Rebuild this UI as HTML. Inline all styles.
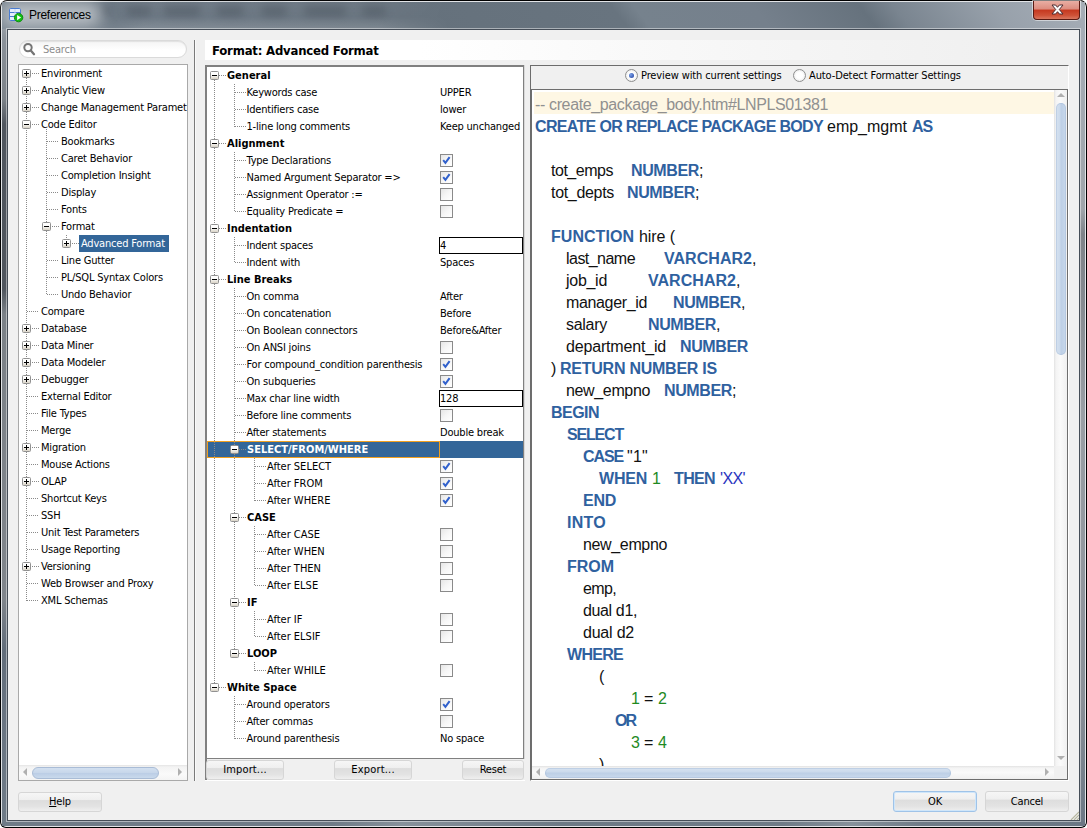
<!DOCTYPE html><html><head><meta charset="utf-8"><title>Preferences</title><style>
*{box-sizing:border-box;margin:0;padding:0}
html,body{width:1087px;height:828px;overflow:hidden;background:#fff}
body{font-family:"DejaVu Sans Condensed","Liberation Sans",sans-serif;font-size:11px;color:#000;position:relative;letter-spacing:-0.2px}
.abs{position:absolute}
#win{position:absolute;left:0;top:0;width:1087px;height:828px;border-radius:7px 7px 6px 6px;background:#000;overflow:hidden}
#glass{position:absolute;left:1px;top:1px;right:1px;bottom:1px;border-radius:6px 6px 5px 5px;border:1px solid rgba(255,255,255,.8);background:#6f7b87}
#tb{position:absolute;left:2px;top:2px;width:1083px;height:27px;background:linear-gradient(52deg,#7a8691 8px,#6b7783 94px,#65717c 323px,#68747f 494px,#76828d 512px,#75808c 606px,#66727d 690px,#7a8590 717px,#98a1ab 796px,#a5adb6 864px)}
#fl{position:absolute;left:2px;top:29px;width:5px;height:797px;background:linear-gradient(#8d949c 0,#7c8288 70px,#50565e 95px,#4f555d 260px,#7b8187 285px,#80858b 570px,#626d7a 620px,#6a7582 700px,#6f7b87 100%)}
#fr{position:absolute;left:1080px;top:29px;width:5px;height:797px;background:linear-gradient(#a5adb6 0,#a0a5ab 180px,#7e8389 205px,#858a90 270px,#9a9fa5 385px,#8a9098 670px,#6b7784 100%)}
#fb{position:absolute;left:2px;top:821px;width:1083px;height:5px;background:linear-gradient(90deg,#6f7b87 0,#6f7b87 330px,#87919b 400px,#7a8590 480px,#6d7985 560px,#6f7b87 780px,#87919b 850px,#6f7b87 920px,#6b7784 100%)}
.blob{position:absolute;top:6px;height:10px;border-radius:5px;background:#4a545f;filter:blur(4.5px);opacity:.62}
#tbl{position:absolute;left:90px;top:2px;width:360px;height:27px;background:linear-gradient(rgba(255,255,255,.05) 0,rgba(255,255,255,.03) 55%,rgba(255,255,255,.16) 100%);-webkit-mask-image:linear-gradient(90deg,transparent,#000 15%,#000 80%,transparent);mask-image:linear-gradient(90deg,transparent,#000 15%,#000 80%,transparent)}
#titleglow{position:absolute;left:2px;top:2px;width:100px;height:25px;border-radius:12px;background:rgba(255,255,255,.5);filter:blur(8px)}
#title{position:absolute;left:29px;top:8px;font-family:"Liberation Sans",sans-serif;font-size:12px;color:#000;line-height:15px;letter-spacing:-.28px}
#inner{position:absolute;left:7px;top:29px;width:1073px;height:792px;border:1px solid #454d57;background:#f0f0f0}
#innerhl{position:absolute;left:6px;top:28px;width:1075px;height:794px;border:1px solid rgba(255,255,255,.45)}
#close{position:absolute;left:1033px;top:1px;width:47px;height:19px;border:1px solid #5a1a12;border-top:none;border-radius:0 0 4px 4px;
 background:linear-gradient(#e9aea3 0,#dc8c7f 45%,#c5381f 50%,#cf5238 80%,#d9775f 100%);box-shadow:0 0 0 1px rgba(255,255,255,.5)}
/* panels */
.btn{position:absolute;height:20px;border:1px solid #d6d6d6;border-radius:3px;background:linear-gradient(#f6f6f6 0,#efefef 38%,#dddddd 42%,#e3e3e3 75%,#efefef 100%);text-align:center;line-height:18px;font-size:11px}
.exp{z-index:2;position:absolute;width:9px;height:9px;border:1px solid #919191;border-radius:1.5px;background:linear-gradient(#fff 0,#fdfdfc 40%,#d9d3c6 100%)}
.exp:before{content:"";position:absolute;left:1px;top:3px;width:5px;height:1px;background:#000}
.exp.p:after{content:"";position:absolute;left:3px;top:1px;width:1px;height:5px;background:#000}
.row{position:absolute;left:0;height:17px;line-height:18px;white-space:nowrap}
.hd{position:absolute;height:1px;background-image:linear-gradient(90deg,#8a8a8a 1px,transparent 1px);background-size:2px 1px}
.vd{position:absolute;width:1px;background-image:linear-gradient(#8a8a8a 1px,transparent 1px);background-size:1px 2px}
.cb{position:absolute;width:13px;height:13px;border:1px solid #8a8a8a;background:linear-gradient(135deg,#e6e6e6,#f6f6f6 50%,#fff)}
.cb svg{position:absolute;left:1px;top:1px}
.code{letter-spacing:0;position:absolute;font-family:"Liberation Sans",sans-serif;font-size:16px;line-height:22px;height:22px;white-space:pre;display:inline-block;transform-origin:0 50%}
.k{color:#2f619f;font-weight:bold}.t{color:#111}.c{color:#909090}.n{color:#1f8a1f}.q{color:#2a35c0}
</style></head><body>
<div id="win"><div id="glass"></div><div id="tb"></div><div id="fl"></div><div id="fr"></div><div id="fb"></div>
<div class="blob" style="left:100px;width:12px"></div>
<div class="blob" style="left:126px;width:26px"></div>
<div class="blob" style="left:163px;width:38px"></div>
<div class="blob" style="left:216px;width:28px"></div>
<div class="blob" style="left:261px;width:26px"></div>
<div class="blob" style="left:304px;width:42px"></div>
<div class="blob" style="left:362px;width:24px"></div>
<div id="tbl"></div><div id="titleglow"></div>
<svg class="abs" style="left:8px;top:7px" width="18" height="17" viewBox="0 0 18 17">
<rect x="1.5" y="1.5" width="11" height="12" rx="1.2" fill="#e6eefb" stroke="#4a7cd0"/>
<path d="M1.5 5.5h11M1.5 9.5h11" stroke="#4a7cd0" fill="none"/>
<path d="M7 2v11" stroke="#c4d6f4" fill="none"/>
<circle cx="10.6" cy="10.6" r="4.2" fill="#14c014" stroke="#0c8c0c" stroke-width="1"/>
<path d="M9.1 8v5.2l4-2.6z" fill="#fff"/></svg>
<div id="title">Preferences</div>
<div id="close"><svg class="abs" style="left:17px;top:3px" width="13" height="11" viewBox="0 0 13 11"><path d="M1 1h3.6l1.9 2.3L8.4 1H12L8.3 5.5 12 10H8.4L6.5 7.7 4.6 10H1l3.7-4.5z" fill="#fff" stroke="#4a2a30" stroke-width="1" stroke-linejoin="round"/></svg></div>
<div id="innerhl"></div><div id="inner"></div>
</div>
<div class="abs" style="left:19px;top:40px;width:168px;height:18px;border:1px solid #dadada;border-radius:9px;background:linear-gradient(#f4f4f4,#fff 60%);box-shadow:inset 0 1px 1px rgba(0,0,0,.08)"></div>
<svg class="abs" style="left:23px;top:42px" width="13" height="14" viewBox="0 0 13 14"><circle cx="5" cy="5.6" r="3.7" fill="none" stroke="#757575" stroke-width="2"/><path d="M7.8 8.6l3.2 3.6" stroke="#757575" stroke-width="2.3" stroke-linecap="round"/></svg>
<div class="abs" style="left:43px;top:43px;line-height:14px;color:#8c8c8c">Search</div>
<div class="abs" id="ltree" style="left:18px;top:64px;width:170px;height:717px;border:1px solid #a9a9a9;background:#fff;overflow:hidden">
<div class="hd" style="left:13px;top:8px;width:8px"></div>
<div class="exp p" style="left:3px;top:4px"></div>
<div class="row" style="left:22px;top:0px;">Environment</div>
<div class="hd" style="left:13px;top:25px;width:8px"></div>
<div class="exp p" style="left:3px;top:21px"></div>
<div class="row" style="left:22px;top:17px;">Analytic View</div>
<div class="hd" style="left:13px;top:42px;width:8px"></div>
<div class="exp p" style="left:3px;top:38px"></div>
<div class="row" style="left:22px;top:34px;">Change Management Paramet</div>
<div class="hd" style="left:13px;top:59px;width:8px"></div>
<div class="exp" style="left:3px;top:55px"></div>
<div class="row" style="left:22px;top:51px;">Code Editor</div>
<div class="hd" style="left:28px;top:76px;width:12px"></div>
<div class="row" style="left:42px;top:68px;">Bookmarks</div>
<div class="hd" style="left:28px;top:93px;width:12px"></div>
<div class="row" style="left:42px;top:85px;">Caret Behavior</div>
<div class="hd" style="left:28px;top:110px;width:12px"></div>
<div class="row" style="left:42px;top:102px;">Completion Insight</div>
<div class="hd" style="left:28px;top:127px;width:12px"></div>
<div class="row" style="left:42px;top:119px;">Display</div>
<div class="hd" style="left:28px;top:144px;width:12px"></div>
<div class="row" style="left:42px;top:136px;">Fonts</div>
<div class="hd" style="left:33px;top:161px;width:8px"></div>
<div class="exp" style="left:23px;top:157px"></div>
<div class="row" style="left:42px;top:153px;">Format</div>
<div class="hd" style="left:53px;top:178px;width:8px"></div>
<div class="exp p" style="left:43px;top:174px"></div>
<div class="abs" style="left:60px;top:170px;width:90px;height:17px;background:#336699"></div>
<div class="row" style="left:62px;top:170px;color:#fff;">Advanced Format</div>
<div class="hd" style="left:28px;top:195px;width:12px"></div>
<div class="row" style="left:42px;top:187px;">Line Gutter</div>
<div class="hd" style="left:28px;top:212px;width:12px"></div>
<div class="row" style="left:42px;top:204px;">PL/SQL Syntax Colors</div>
<div class="hd" style="left:28px;top:229px;width:12px"></div>
<div class="row" style="left:42px;top:221px;">Undo Behavior</div>
<div class="hd" style="left:8px;top:246px;width:12px"></div>
<div class="row" style="left:22px;top:238px;">Compare</div>
<div class="hd" style="left:13px;top:263px;width:8px"></div>
<div class="exp p" style="left:3px;top:259px"></div>
<div class="row" style="left:22px;top:255px;">Database</div>
<div class="hd" style="left:13px;top:280px;width:8px"></div>
<div class="exp p" style="left:3px;top:276px"></div>
<div class="row" style="left:22px;top:272px;">Data Miner</div>
<div class="hd" style="left:13px;top:297px;width:8px"></div>
<div class="exp p" style="left:3px;top:293px"></div>
<div class="row" style="left:22px;top:289px;">Data Modeler</div>
<div class="hd" style="left:13px;top:314px;width:8px"></div>
<div class="exp p" style="left:3px;top:310px"></div>
<div class="row" style="left:22px;top:306px;">Debugger</div>
<div class="hd" style="left:8px;top:331px;width:12px"></div>
<div class="row" style="left:22px;top:323px;">External Editor</div>
<div class="hd" style="left:8px;top:348px;width:12px"></div>
<div class="row" style="left:22px;top:340px;">File Types</div>
<div class="hd" style="left:8px;top:365px;width:12px"></div>
<div class="row" style="left:22px;top:357px;">Merge</div>
<div class="hd" style="left:13px;top:382px;width:8px"></div>
<div class="exp p" style="left:3px;top:378px"></div>
<div class="row" style="left:22px;top:374px;">Migration</div>
<div class="hd" style="left:8px;top:399px;width:12px"></div>
<div class="row" style="left:22px;top:391px;">Mouse Actions</div>
<div class="hd" style="left:13px;top:416px;width:8px"></div>
<div class="exp p" style="left:3px;top:412px"></div>
<div class="row" style="left:22px;top:408px;">OLAP</div>
<div class="hd" style="left:8px;top:433px;width:12px"></div>
<div class="row" style="left:22px;top:425px;">Shortcut Keys</div>
<div class="hd" style="left:8px;top:450px;width:12px"></div>
<div class="row" style="left:22px;top:442px;">SSH</div>
<div class="hd" style="left:8px;top:467px;width:12px"></div>
<div class="row" style="left:22px;top:459px;">Unit Test Parameters</div>
<div class="hd" style="left:8px;top:484px;width:12px"></div>
<div class="row" style="left:22px;top:476px;">Usage Reporting</div>
<div class="hd" style="left:13px;top:501px;width:8px"></div>
<div class="exp p" style="left:3px;top:497px"></div>
<div class="row" style="left:22px;top:493px;">Versioning</div>
<div class="hd" style="left:8px;top:518px;width:12px"></div>
<div class="row" style="left:22px;top:510px;">Web Browser and Proxy</div>
<div class="hd" style="left:8px;top:535px;width:12px"></div>
<div class="row" style="left:22px;top:527px;">XML Schemas</div>
<div class="vd" style="left:7px;top:13px;height:523px"></div>
<div class="vd" style="left:27px;top:64px;height:166px"></div>
<div class="vd" style="left:47px;top:170px;height:4px"></div>
<div class="abs" style="left:0;top:700px;width:168px;height:15px;background:linear-gradient(#e4e4e4 0,#f3f3f3 2px,#fafafa 60%,#f4f4f4)"></div>
<div class="abs" style="left:13px;top:702px;width:127px;height:12px;border:1px solid #a9bcd6;border-radius:6px;background:linear-gradient(#d3e0f0,#c6d6ea 50%,#bccee6 55%,#c9d9ec)"></div>
<div class="abs" style="left:4px;top:703px;border:4px solid transparent;border-right:4px solid #b0b0b0;border-left:none"></div>
<div class="abs" style="left:159px;top:703px;border:4px solid transparent;border-left:4px solid #b0b0b0;border-right:none"></div>
</div>
<div class="abs" style="left:194px;top:40px;width:1px;height:741px;background:#7a7a7a"></div>
<div class="abs" style="left:195px;top:40px;width:1px;height:741px;background:#fafafa"></div>
<div class="abs" style="left:205px;top:40px;width:864px;height:20px;background:linear-gradient(90deg,#fff 0,#fff 25%,#f9f9f9 50%,#f0f0f0 92%)"></div>
<div class="abs" style="left:212px;top:43px;font-weight:bold;font-size:13px;line-height:16px">Format: Advanced Format</div>
<div class="abs" id="stree" style="left:205px;top:65px;width:319px;height:694px;border:2px solid #808080;border-right-width:1px;border-bottom-width:1px;background:#fff;overflow:hidden;box-shadow:1px 0 0 #d8d8d8">
<div class="hd" style="left:12px;top:8px;width:7px"></div>
<div class="exp" style="left:3px;top:4px"></div>
<div class="row" style="left:20px;top:0px;font-weight:bold;letter-spacing:0;">General</div>
<div class="hd" style="left:28px;top:25px;width:12px"></div>
<div class="row" style="left:39.5px;top:17px">Keywords case</div>
<div class="row" style="left:233px;top:17px">UPPER</div>
<div class="hd" style="left:28px;top:42px;width:12px"></div>
<div class="row" style="left:39.5px;top:34px">Identifiers case</div>
<div class="row" style="left:233px;top:34px">lower</div>
<div class="hd" style="left:28px;top:59px;width:12px"></div>
<div class="row" style="left:39.5px;top:51px">1-line long comments</div>
<div class="row" style="left:233px;top:51px">Keep unchanged</div>
<div class="hd" style="left:12px;top:76px;width:7px"></div>
<div class="exp" style="left:3px;top:72px"></div>
<div class="row" style="left:20px;top:68px;font-weight:bold;letter-spacing:0;">Alignment</div>
<div class="hd" style="left:28px;top:93px;width:12px"></div>
<div class="row" style="left:39.5px;top:85px">Type Declarations</div>
<div class="cb" style="left:233px;top:87px"><svg width="9" height="9" viewBox="0 0 9 9"><path d="M1.2 4.2l2.2 2.6 4.2-5.6" fill="none" stroke="#3060cc" stroke-width="2"/></svg></div>
<div class="hd" style="left:28px;top:110px;width:12px"></div>
<div class="row" style="left:39.5px;top:102px">Named Argument Separator =></div>
<div class="cb" style="left:233px;top:104px"><svg width="9" height="9" viewBox="0 0 9 9"><path d="M1.2 4.2l2.2 2.6 4.2-5.6" fill="none" stroke="#3060cc" stroke-width="2"/></svg></div>
<div class="hd" style="left:28px;top:127px;width:12px"></div>
<div class="row" style="left:39.5px;top:119px">Assignment Operator :=</div>
<div class="cb" style="left:233px;top:121px"></div>
<div class="hd" style="left:28px;top:144px;width:12px"></div>
<div class="row" style="left:39.5px;top:136px">Equality Predicate =</div>
<div class="cb" style="left:233px;top:138px"></div>
<div class="hd" style="left:12px;top:161px;width:7px"></div>
<div class="exp" style="left:3px;top:157px"></div>
<div class="row" style="left:20px;top:153px;font-weight:bold;letter-spacing:0;">Indentation</div>
<div class="hd" style="left:28px;top:178px;width:12px"></div>
<div class="row" style="left:39.5px;top:170px">Indent spaces</div>
<div class="abs" style="left:232px;top:170px;width:84px;height:17px;border:1px solid #000;border-width:1px 1px 1px 1px;background:#fff;line-height:15px;padding-left:0">4</div>
<div class="hd" style="left:28px;top:195px;width:12px"></div>
<div class="row" style="left:39.5px;top:187px">Indent with</div>
<div class="row" style="left:233px;top:187px">Spaces</div>
<div class="hd" style="left:12px;top:212px;width:7px"></div>
<div class="exp" style="left:3px;top:208px"></div>
<div class="row" style="left:20px;top:204px;font-weight:bold;letter-spacing:0;">Line Breaks</div>
<div class="hd" style="left:28px;top:229px;width:12px"></div>
<div class="row" style="left:39.5px;top:221px">On comma</div>
<div class="row" style="left:233px;top:221px">After</div>
<div class="hd" style="left:28px;top:246px;width:12px"></div>
<div class="row" style="left:39.5px;top:238px">On concatenation</div>
<div class="row" style="left:233px;top:238px">Before</div>
<div class="hd" style="left:28px;top:263px;width:12px"></div>
<div class="row" style="left:39.5px;top:255px">On Boolean connectors</div>
<div class="row" style="left:233px;top:255px">Before&After</div>
<div class="hd" style="left:28px;top:280px;width:12px"></div>
<div class="row" style="left:39.5px;top:272px">On ANSI joins</div>
<div class="cb" style="left:233px;top:274px"></div>
<div class="hd" style="left:28px;top:297px;width:12px"></div>
<div class="row" style="left:39.5px;top:289px">For compound_condition parenthesis</div>
<div class="cb" style="left:233px;top:291px"><svg width="9" height="9" viewBox="0 0 9 9"><path d="M1.2 4.2l2.2 2.6 4.2-5.6" fill="none" stroke="#3060cc" stroke-width="2"/></svg></div>
<div class="hd" style="left:28px;top:314px;width:12px"></div>
<div class="row" style="left:39.5px;top:306px">On subqueries</div>
<div class="cb" style="left:233px;top:308px"><svg width="9" height="9" viewBox="0 0 9 9"><path d="M1.2 4.2l2.2 2.6 4.2-5.6" fill="none" stroke="#3060cc" stroke-width="2"/></svg></div>
<div class="hd" style="left:28px;top:331px;width:12px"></div>
<div class="row" style="left:39.5px;top:323px">Max char line width</div>
<div class="abs" style="left:232px;top:323px;width:84px;height:17px;border:1px solid #000;border-width:1px 1px 1px 1px;background:#fff;line-height:15px;padding-left:0">128</div>
<div class="hd" style="left:28px;top:348px;width:12px"></div>
<div class="row" style="left:39.5px;top:340px">Before line comments</div>
<div class="cb" style="left:233px;top:342px"></div>
<div class="hd" style="left:28px;top:365px;width:12px"></div>
<div class="row" style="left:39.5px;top:357px">After statements</div>
<div class="row" style="left:233px;top:357px">Double break</div>
<div class="abs" style="left:0;top:374px;width:316px;height:17px;background:#336699"></div>
<div class="abs" style="left:0;top:374px;width:233px;height:17px;border:1px solid #f0a020"></div>
<div class="hd" style="left:32px;top:382px;width:7px"></div>
<div class="exp" style="left:23px;top:378px"></div>
<div class="row" style="left:40px;top:374px;font-weight:bold;letter-spacing:0;color:#fff;">SELECT/FROM/WHERE</div>
<div class="hd" style="left:48px;top:399px;width:12px"></div>
<div class="row" style="left:60.0px;top:391px;letter-spacing:0">After SELECT</div>
<div class="cb" style="left:233px;top:393px"><svg width="9" height="9" viewBox="0 0 9 9"><path d="M1.2 4.2l2.2 2.6 4.2-5.6" fill="none" stroke="#3060cc" stroke-width="2"/></svg></div>
<div class="hd" style="left:48px;top:416px;width:12px"></div>
<div class="row" style="left:60.0px;top:408px;letter-spacing:0">After FROM</div>
<div class="cb" style="left:233px;top:410px"><svg width="9" height="9" viewBox="0 0 9 9"><path d="M1.2 4.2l2.2 2.6 4.2-5.6" fill="none" stroke="#3060cc" stroke-width="2"/></svg></div>
<div class="hd" style="left:48px;top:433px;width:12px"></div>
<div class="row" style="left:60.0px;top:425px;letter-spacing:0">After WHERE</div>
<div class="cb" style="left:233px;top:427px"><svg width="9" height="9" viewBox="0 0 9 9"><path d="M1.2 4.2l2.2 2.6 4.2-5.6" fill="none" stroke="#3060cc" stroke-width="2"/></svg></div>
<div class="hd" style="left:32px;top:450px;width:7px"></div>
<div class="exp" style="left:23px;top:446px"></div>
<div class="row" style="left:40px;top:442px;font-weight:bold;letter-spacing:0;">CASE</div>
<div class="hd" style="left:48px;top:467px;width:12px"></div>
<div class="row" style="left:60.0px;top:459px;letter-spacing:0">After CASE</div>
<div class="cb" style="left:233px;top:461px"></div>
<div class="hd" style="left:48px;top:484px;width:12px"></div>
<div class="row" style="left:60.0px;top:476px;letter-spacing:0">After WHEN</div>
<div class="cb" style="left:233px;top:478px"></div>
<div class="hd" style="left:48px;top:501px;width:12px"></div>
<div class="row" style="left:60.0px;top:493px;letter-spacing:0">After THEN</div>
<div class="cb" style="left:233px;top:495px"></div>
<div class="hd" style="left:48px;top:518px;width:12px"></div>
<div class="row" style="left:60.0px;top:510px;letter-spacing:0">After ELSE</div>
<div class="cb" style="left:233px;top:512px"></div>
<div class="hd" style="left:32px;top:535px;width:7px"></div>
<div class="exp" style="left:23px;top:531px"></div>
<div class="row" style="left:40px;top:527px;font-weight:bold;letter-spacing:0;">IF</div>
<div class="hd" style="left:48px;top:552px;width:12px"></div>
<div class="row" style="left:60.0px;top:544px;letter-spacing:0">After IF</div>
<div class="cb" style="left:233px;top:546px"></div>
<div class="hd" style="left:48px;top:569px;width:12px"></div>
<div class="row" style="left:60.0px;top:561px;letter-spacing:0">After ELSIF</div>
<div class="cb" style="left:233px;top:563px"></div>
<div class="hd" style="left:32px;top:586px;width:7px"></div>
<div class="exp" style="left:23px;top:582px"></div>
<div class="row" style="left:40px;top:578px;font-weight:bold;letter-spacing:0;">LOOP</div>
<div class="hd" style="left:48px;top:603px;width:12px"></div>
<div class="row" style="left:60.0px;top:595px;letter-spacing:0">After WHILE</div>
<div class="cb" style="left:233px;top:597px"></div>
<div class="hd" style="left:12px;top:620px;width:7px"></div>
<div class="exp" style="left:3px;top:616px"></div>
<div class="row" style="left:20px;top:612px;font-weight:bold;letter-spacing:0;">White Space</div>
<div class="hd" style="left:28px;top:637px;width:12px"></div>
<div class="row" style="left:39.5px;top:629px">Around operators</div>
<div class="cb" style="left:233px;top:631px"><svg width="9" height="9" viewBox="0 0 9 9"><path d="M1.2 4.2l2.2 2.6 4.2-5.6" fill="none" stroke="#3060cc" stroke-width="2"/></svg></div>
<div class="hd" style="left:28px;top:654px;width:12px"></div>
<div class="row" style="left:39.5px;top:646px">After commas</div>
<div class="cb" style="left:233px;top:648px"></div>
<div class="hd" style="left:28px;top:671px;width:12px"></div>
<div class="row" style="left:39.5px;top:663px">Around parenthesis</div>
<div class="row" style="left:233px;top:663px">No space</div>
<div class="vd" style="left:7px;top:13px;height:603px"></div>
<div class="vd" style="left:27px;top:17px;height:43px"></div>
<div class="vd" style="left:27px;top:85px;height:60px"></div>
<div class="vd" style="left:27px;top:170px;height:26px"></div>
<div class="vd" style="left:27px;top:221px;height:361px"></div>
<div class="vd" style="left:27px;top:629px;height:43px"></div>
<div class="vd" style="left:47px;top:391px;height:43px"></div>
<div class="vd" style="left:47px;top:459px;height:60px"></div>
<div class="vd" style="left:47px;top:544px;height:26px"></div>
<div class="vd" style="left:47px;top:595px;height:9px"></div>
</div>
<div class="abs" style="left:205px;top:759px;width:2px;height:21px;background:#808080"></div>
<div class="abs" style="left:205px;top:780px;width:320px;height:1px;background:#fff"></div>
<div class="btn" style="left:206px;top:760px;width:78px;letter-spacing:.12px">Import...</div>
<div class="btn" style="left:334px;top:760px;width:78px;letter-spacing:.2px">Export...</div>
<div class="btn" style="left:462px;top:760px;width:62px">Reset</div>
<div class="btn" style="left:18px;top:792px;width:84px;height:20px;line-height:18px"><u>H</u>elp</div>
<div class="btn" style="left:893px;top:791px;width:84px;height:21px;line-height:19px;border-color:#9fc3e8;box-shadow:inset 0 0 0 1px #cfe6fa">OK</div>
<div class="btn" style="left:985px;top:791px;width:84px;height:21px;line-height:19px">Cancel</div>
<div class="abs" style="left:530px;top:65px;width:539px;height:716px;border:1px solid #6c6c6c;border-right-color:#fff;border-bottom-color:#fff"></div>
<div class="abs" style="left:625px;top:69px;width:13px;height:13px;border:1px solid #8e8f8f;border-radius:50%;background:radial-gradient(circle at 50% 50%,#fff 40%,#e0e0e0 100%)"><div class="abs" style="left:3px;top:3px;width:5px;height:5px;border-radius:50%;background:radial-gradient(circle at 35% 35%,#7aa0e8,#1c3c9c)"></div></div>
<div class="abs" style="left:793px;top:69px;width:13px;height:13px;border:1px solid #8e8f8f;border-radius:50%;background:radial-gradient(circle at 50% 50%,#fff 40%,#e0e0e0 100%)"></div>
<div class="abs" style="left:641px;top:69px;line-height:14px;letter-spacing:-0.12px">Preview with current settings</div>
<div class="abs" style="left:809px;top:69px;line-height:14px;letter-spacing:-0.12px">Auto-Detect Formatter Settings</div>
<div class="abs" id="ed" style="left:531px;top:89px;width:537px;height:691px;border:1px solid #6e6e6e;background:#fff;overflow:hidden">
<div class="abs" style="left:2px;top:2px;width:520px;height:22px;background:#fef7e4"></div>
<span class="code c" style="left:3px;top:4px;letter-spacing:-0.367px">-- create_package_body.htm#LNPLS01381</span>
<span class="code k" style="left:3px;top:26px;letter-spacing:-0.662px">CREATE OR REPLACE PACKAGE BODY</span>
<span class="code t" style="left:295px;top:26px;letter-spacing:-0.004px">emp_mgmt</span>
<span class="code k" style="left:380px;top:26px;letter-spacing:-1.117px">AS</span>
<span class="code t" style="left:19px;top:70px;letter-spacing:-0.477px">tot_emps</span>
<span class="code k" style="left:99px;top:70px;letter-spacing:-0.370px">NUMBER</span>
<span class="code t" style="left:167px;top:70px;letter-spacing:-0.453px">;</span>
<span class="code t" style="left:19px;top:92px;letter-spacing:-0.314px">tot_depts</span>
<span class="code k" style="left:95px;top:92px;letter-spacing:-0.370px">NUMBER</span>
<span class="code t" style="left:163px;top:92px;letter-spacing:-0.453px">;</span>
<span class="code k" style="left:19px;top:136px;letter-spacing:0.043px">FUNCTION</span>
<span class="code t" style="left:107px;top:136px;letter-spacing:-0.076px">hire (</span>
<span class="code t" style="left:34px;top:158px;letter-spacing:-0.536px">last_name</span>
<span class="code k" style="left:132px;top:158px;letter-spacing:0.035px">VARCHAR2</span>
<span class="code t" style="left:220px;top:158px;letter-spacing:-0.453px">,</span>
<span class="code t" style="left:34px;top:180px;letter-spacing:-0.284px">job_id</span>
<span class="code k" style="left:116px;top:180px;letter-spacing:0.035px">VARCHAR2</span>
<span class="code t" style="left:204px;top:180px;letter-spacing:-0.453px">,</span>
<span class="code t" style="left:34px;top:202px;letter-spacing:-0.350px">manager_id</span>
<span class="code k" style="left:141px;top:202px;letter-spacing:-0.370px">NUMBER</span>
<span class="code t" style="left:209px;top:202px;letter-spacing:-0.453px">,</span>
<span class="code t" style="left:34px;top:224px;letter-spacing:-0.281px">salary</span>
<span class="code k" style="left:116px;top:224px;letter-spacing:-0.370px">NUMBER</span>
<span class="code t" style="left:184px;top:224px;letter-spacing:-0.453px">,</span>
<span class="code t" style="left:34px;top:246px;letter-spacing:-0.177px">department_id</span>
<span class="code k" style="left:148px;top:246px;letter-spacing:-0.370px">NUMBER</span>
<span class="code t" style="left:19px;top:268px;letter-spacing:-0.328px">)</span>
<span class="code k" style="left:28px;top:268px;letter-spacing:-0.243px">RETURN NUMBER IS</span>
<span class="code t" style="left:34px;top:290px;letter-spacing:-0.352px">new_empno</span>
<span class="code k" style="left:132px;top:290px;letter-spacing:-0.370px">NUMBER</span>
<span class="code t" style="left:200px;top:290px;letter-spacing:-0.453px">;</span>
<span class="code k" style="left:19px;top:312px;letter-spacing:-0.534px">BEGIN</span>
<span class="code k" style="left:35px;top:334px;letter-spacing:-1.188px">SELECT</span>
<span class="code k" style="left:51px;top:356px;letter-spacing:-1.113px">CASE</span>
<span class="code t" style="left:95px;top:356px;letter-spacing:0.245px">"1"</span>
<span class="code k" style="left:67px;top:378px;letter-spacing:-0.223px">WHEN</span>
<span class="code n" style="left:120px;top:378px;letter-spacing:0.094px">1</span>
<span class="code k" style="left:142px;top:378px;letter-spacing:-0.641px">THEN</span>
<span class="code q" style="left:188px;top:378px;letter-spacing:-0.613px">'XX'</span>
<span class="code k" style="left:51px;top:400px;letter-spacing:-0.260px">END</span>
<span class="code k" style="left:35px;top:422px;letter-spacing:0.266px">INTO</span>
<span class="code t" style="left:51px;top:444px;letter-spacing:-0.352px">new_empno</span>
<span class="code k" style="left:35px;top:466px;letter-spacing:-0.027px">FROM</span>
<span class="code t" style="left:51px;top:488px;letter-spacing:-0.645px">emp,</span>
<span class="code t" style="left:51px;top:510px;letter-spacing:-0.367px">dual d1,</span>
<span class="code t" style="left:51px;top:532px;letter-spacing:-0.214px">dual d2</span>
<span class="code k" style="left:35px;top:554px;letter-spacing:-0.713px">WHERE</span>
<span class="code t" style="left:67px;top:576px;letter-spacing:-1.328px">(</span>
<span class="code n" style="left:99px;top:598px;letter-spacing:0.094px">1</span>
<span class="code t" style="left:112px;top:598px;letter-spacing:-0.344px">=</span>
<span class="code n" style="left:126px;top:598px;letter-spacing:0.094px">2</span>
<span class="code k" style="left:83px;top:620px;letter-spacing:-2.000px">OR</span>
<span class="code n" style="left:99px;top:642px;letter-spacing:0.094px">3</span>
<span class="code t" style="left:112px;top:642px;letter-spacing:-0.344px">=</span>
<span class="code n" style="left:126px;top:642px;letter-spacing:0.094px">4</span>
<span class="code t" style="left:67px;top:664px;letter-spacing:-1.328px">)</span>
<div class="abs" style="left:522px;top:0;width:13px;height:676px;background:linear-gradient(90deg,#e2e2e2 0,#f4f4f4 2px,#fafafa 50%,#f0f0f0 100%)"></div>
<div class="abs" style="left:524px;top:13px;width:10px;height:252px;border-radius:5px;background:linear-gradient(90deg,#d6e2f0,#cbdaec 40%,#bdcfe6 50%,#c9d9ec);box-shadow:inset 0 0 0 1px rgba(150,175,210,.35)"></div>
<div class="abs" style="left:525px;top:3px;border:4px solid transparent;border-bottom:4px solid #b0b0b0;border-top:none"></div>
<div class="abs" style="left:525px;top:666px;border:4px solid transparent;border-top:4px solid #b0b0b0;border-bottom:none"></div>
<div class="abs" style="left:0;top:676px;width:522px;height:13px;background:linear-gradient(#e2e2e2 0,#f4f4f4 2px,#fafafa 50%,#f0f0f0 100%)"></div>
<div class="abs" style="left:522px;top:676px;width:13px;height:13px;background:#f0f0f0"></div>
<div class="abs" style="left:13px;top:678px;width:406px;height:10px;border-radius:5px;background:linear-gradient(#d6e2f0,#cbdaec 40%,#bdcfe6 50%,#c9d9ec);box-shadow:inset 0 0 0 1px rgba(150,175,210,.35)"></div>
<div class="abs" style="left:4px;top:678px;border:4px solid transparent;border-right:4px solid #b0b0b0;border-left:none"></div>
<div class="abs" style="left:513px;top:678px;border:4px solid transparent;border-left:4px solid #b0b0b0;border-right:none"></div>
</div>
<svg class="abs" style="left:1070px;top:811px" width="9" height="9" viewBox="0 0 9 9"><path d="M9 1L1 9M9 4L4 9M9 7L7 9" stroke="#b4b49c" stroke-width="1.1"/></svg>
</body></html>
